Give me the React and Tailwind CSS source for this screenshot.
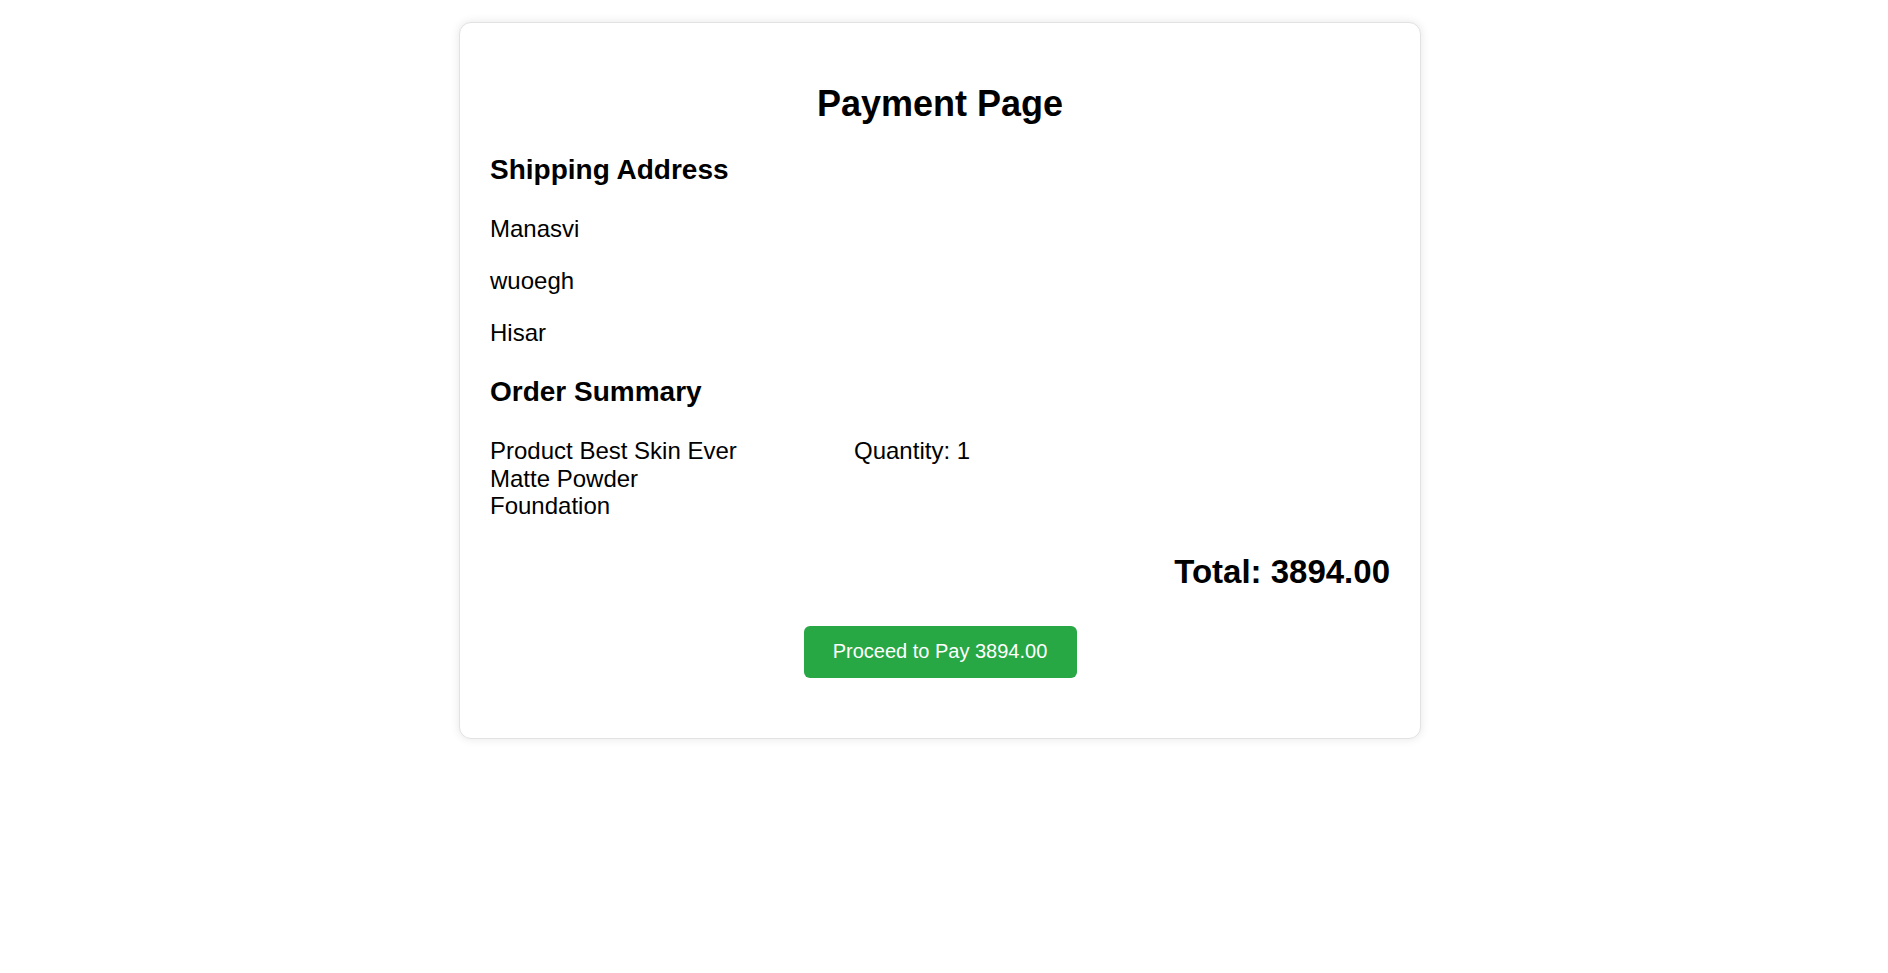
export default function App() {
  return (
    <div
      className="min-h-screen w-full bg-white flex justify-center pr-[8px] text-black"
      style={{ fontFamily: '"Liberation Sans", Arial, sans-serif' }}
    >
      <div className="mt-[22px] w-[962px] self-start rounded-[12px] border border-[#e2e2e2] bg-white px-[30px] pt-[30px] pb-[60px] shadow-[0_0_10px_rgba(0,0,0,0.1)]">
        <h1 className="mt-[30px] text-center text-[36px] leading-[41px] font-bold">
          Payment Page
        </h1>
        <h2 className="mt-[30px] text-[28px] leading-[32px] font-bold">
          Shipping Address
        </h2>
        <p className="mt-[29px] text-[24px] leading-[28px]">Manasvi</p>
        <p className="mt-[24px] text-[24px] leading-[28px]">wuoegh</p>
        <p className="mt-[24px] text-[24px] leading-[28px]">Hisar</p>
        <h2 className="mt-[29px] text-[28px] leading-[32px] font-bold">
          Order Summary
        </h2>
        <div className="mt-[29px] flex text-[24px] leading-[27.6px]">
          <div className="w-[260px]">Product Best Skin Ever Matte Powder Foundation</div>
          <div className="ml-[104px]">Quantity: 1</div>
        </div>
        <div className="mt-[33px] text-right text-[33px] leading-[38px] font-bold">
          Total: 3894.00
        </div>
        <div className="mt-[35px] flex justify-center">
          <button className="flex h-[52px] w-[273px] items-center justify-center rounded-[6px] bg-[#28a745] text-[20px] leading-[23px] text-white">
            Proceed to Pay 3894.00
          </button>
        </div>
      </div>
    </div>
  );
}
